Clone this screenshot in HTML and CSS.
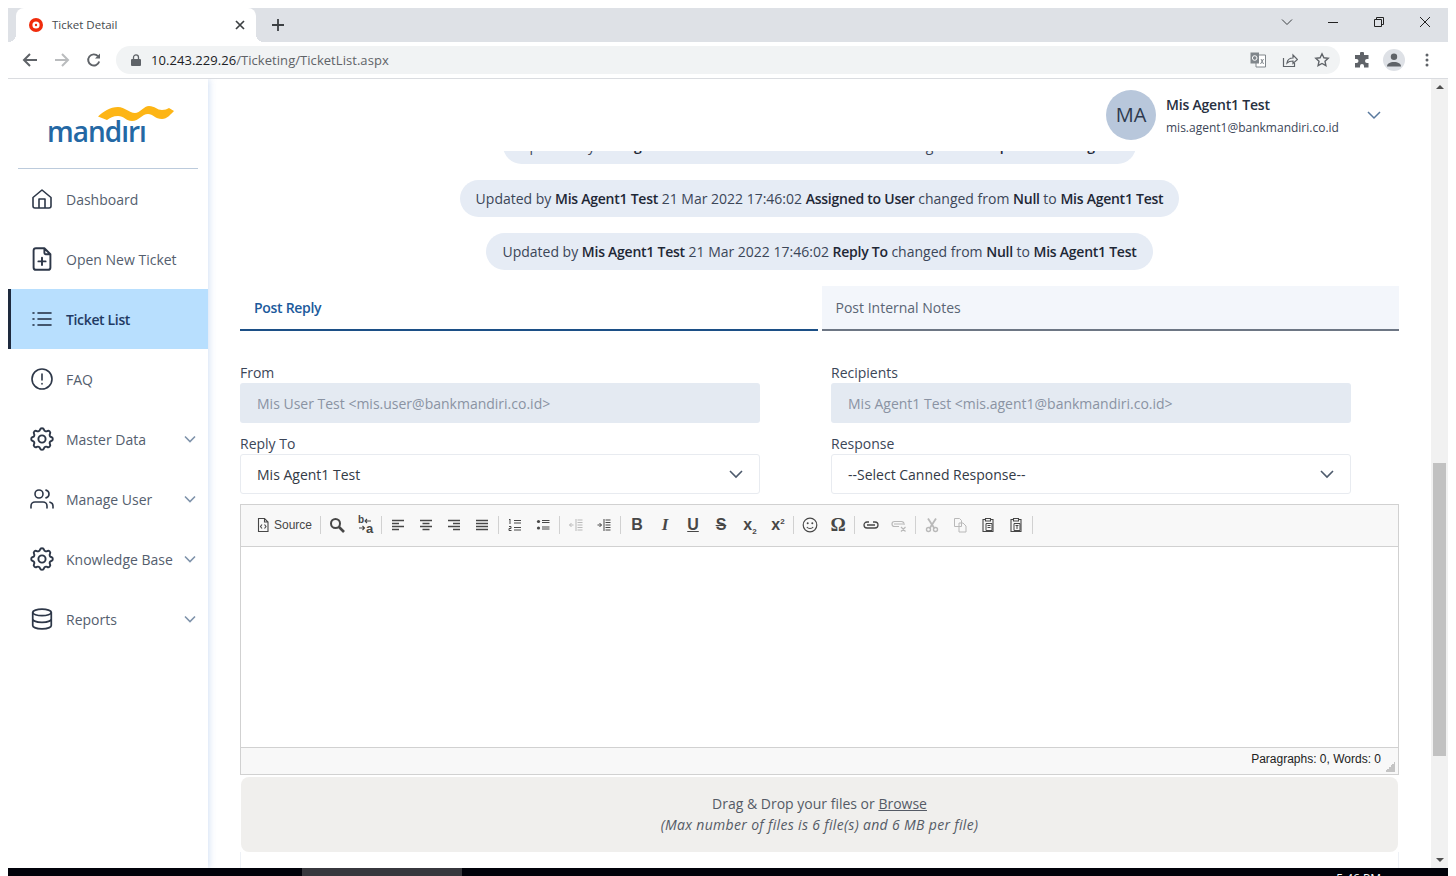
FILE: index.html
```html
<!DOCTYPE html>
<html lang="en">
<head>
<meta charset="UTF-8">
<meta name="viewport" content="width=device-width, initial-scale=1.0">
<title>Ticket Detail</title>
<link rel="stylesheet" href="styles.css">
</head>
<body>
<div class="screen">

    <!-- browser tabs -->
    <div class="tabstrip">
        <div class="browser-tab">
            <svg class="favicon" width="14" height="14" viewBox="0 0 14 14"><circle cx="7" cy="7" r="7" fill="#f02c0c"/><circle cx="7" cy="7" r="3.6" fill="#fff"/><circle cx="7" cy="7" r="1.2" fill="#f02c0c"/></svg>
            <span class="browser-tab-title">Ticket Detail</span>
            <svg width="10" height="10" viewBox="0 0 10 10" stroke="#3c4043" stroke-width="1.7" fill="none"><path d="M1 1l8 8M9 1l-8 8"/></svg>
        </div>
        <svg class="new-tab" width="14" height="14" viewBox="0 0 14 14" stroke="#3c4043" stroke-width="1.8"><path d="M7 1v12M1 7h12"/></svg>
        <div class="window-buttons">
            <svg width="12" height="12" viewBox="0 0 12 12" fill="none" stroke="#3c4043"><path d="M1 3.5l5 5 5-5"/></svg>
            <svg width="12" height="12" viewBox="0 0 12 12" stroke="#222"><path d="M1 6.5h10"/></svg>
            <svg width="12" height="12" viewBox="0 0 12 12" fill="none" stroke="#222"><path d="M1.5 3.5h7v7h-7zM3.5 3.5v-2h7v7h-2"/></svg>
            <svg width="12" height="12" viewBox="0 0 12 12" stroke="#222"><path d="M1 1l10 10M11 1L1 11"/></svg>
        </div>
    </div>

    <!-- browser toolbar -->
    <div class="toolbar">
        <svg width="16" height="16" viewBox="0 0 16 16" fill="none" stroke="#5f6368" stroke-width="2"><path d="M15 8H2M8 2L2 8l6 6"/></svg>
        <svg width="16" height="16" viewBox="0 0 16 16" fill="none" stroke="#babcbe" stroke-width="2"><path d="M1 8h13M8 2l6 6-6 6"/></svg>
        <svg width="16" height="16" viewBox="0 0 16 16" fill="none" stroke="#5f6368" stroke-width="1.9"><path d="M13.2 9.5A5.6 5.6 0 1 1 12 4.2"/><path d="M14 1.5v5H9" fill="#5f6368" stroke="none"/></svg>
        <div class="omnibox">
            <svg width="10" height="12" viewBox="0 0 10 12"><path d="M1 5h8a1 1 0 0 1 1 1v5a1 1 0 0 1-1 1H1a1 1 0 0 1-1-1V6a1 1 0 0 1 1-1z" fill="#5f6368"/><path d="M2.5 5V3.4a2.5 2.5 0 0 1 5 0V5" fill="none" stroke="#5f6368" stroke-width="1.3"/></svg>
            <span class="url"><span class="url-host">10.243.229.26</span>/Ticketing/TicketList.aspx</span>
            <div class="omnibox-icons">
                <svg width="16" height="16" viewBox="0 0 16 16"><path d="M6 3h9.500v12H6z" fill="#fff" stroke="#80868b"/><path d="M.5.500h8.500v11H.5z" fill="#80868b"/><circle cx="4.700" cy="6" r="2.300" fill="none" stroke="#fff"/><path d="M11 7l2.500 5M13.500 7l-3 5" stroke="#80868b" fill="none"/></svg>
                <svg width="16" height="16" viewBox="0 0 16 16" fill="none" stroke="#5f6368" stroke-width="1.200"><path d="M1.500 6v8.500h11V11"/><path d="M5 11c.5-3.500 3-5 6-5V3l4.500 4.500L11 11.500V9c-2.500 0-4.500.5-6 2z"/></svg>
                <svg width="16" height="16" viewBox="0 0 16 16" fill="none" stroke="#5f6368" stroke-width="1.400"><path d="M8 1.800l1.900 4 4.300.5-3.200 3 .9 4.300L8 11.500l-3.900 2.100.9-4.300-3.200-3 4.300-.5z"/></svg>
            </div>
        </div>
        <svg width="16" height="16" viewBox="0 0 16 16" fill="#5f6368"><path d="M6 1.500a2 2 0 0 1 4 0V3h4.500v4H13a2 2 0 0 0 0 4h1.500v4.500H10V14a2 2 0 0 0-4 0v1.500H1V11h1.500a2 2 0 0 0 0-4H1V3h5z"/></svg>
        <div class="profile"><svg width="14" height="14" viewBox="0 0 14 14" fill="#5f6368"><circle cx="7" cy="3.800" r="3.200"/><path d="M0 13.500c0-3 3-4.500 7-4.500s7 1.500 7 4.500z"/></svg></div>
        <svg width="4" height="14" viewBox="0 0 4 14" fill="#5f6368"><circle cx="2" cy="2" r="1.500"/><circle cx="2" cy="7" r="1.500"/><circle cx="2" cy="12" r="1.500"/></svg>
    </div>

    <div class="page">

        <div class="sidebar">
            <div class="logo">
                <span class="logo-text">mandiri</span>
                <!-- the logo has no dots on the i's, the two white bars cover them -->
                <svg class="logo-wave" width="78" height="21" viewBox="0 0 78 21"><path d="M24 13h7v7h-7zM41 13h7v7h-7z" fill="#fff"/><path d="M0 10.500C5 6 12 1 20 1c7 0 11 6 17 6 5 0 9-7 14-7 6 0 8 4 13 4 3 0 5-1 7-2l5 3c-3 3-7 8-12 8-7 0-9-5-14-5-6 0-9 7-16 7-6 0-8-5-14-5-5 0-8 2-11 4z" fill="#fdb515"/></svg>
            </div>
            <nav class="nav">
                <a class="nav-item">
                    <svg class="nav-icon" viewBox="0 0 24 24"><path d="M3 10.500L12 3l9 7.500V19a2 2 0 0 1-2 2H5a2 2 0 0 1-2-2zM9 21v-9h6v9"/></svg>
                    <span>Dashboard</span>
                </a>
                <a class="nav-item">
                    <svg class="nav-icon" viewBox="2 2 20 20"><path d="M14 3v4a1 1 0 0 0 1 1h4M17 21H7a2 2 0 0 1-2-2V5a2 2 0 0 1 2-2h7l5 5v11a2 2 0 0 1-2 2zM12 11v6M9 14h6"/></svg>
                    <span>Open New Ticket</span>
                </a>
                <a class="nav-item active">
                    <svg class="nav-icon" viewBox="0 0 24 24"><path d="M8 6h13M8 12h13M8 18h13M3 6h1M3 12h1M3 18h1"/></svg>
                    <span>Ticket List</span>
                </a>
                <a class="nav-item">
                    <svg class="nav-icon" viewBox="0 0 24 24"><circle cx="12" cy="12" r="10"/><path d="M12 7v6M12 16.500v.5"/></svg>
                    <span>FAQ</span>
                </a>
                <a class="nav-item">
                    <svg class="nav-icon" viewBox="2 2 20 20"><path d="M10.325 4.317c.426-1.756 2.924-1.756 3.350 0a1.724 1.724 0 0 0 2.573 1.066c1.543-.94 3.310.826 2.370 2.370a1.724 1.724 0 0 0 1.065 2.572c1.756.426 1.756 2.924 0 3.350a1.724 1.724 0 0 0-1.066 2.573c.94 1.543-.826 3.310-2.370 2.370a1.724 1.724 0 0 0-2.572 1.065c-.426 1.756-2.924 1.756-3.350 0a1.724 1.724 0 0 0-2.573-1.066c-1.543.94-3.310-.826-2.370-2.370a1.724 1.724 0 0 0-1.065-2.572c-1.756-.426-1.756-2.924 0-3.350a1.724 1.724 0 0 0 1.066-2.573c-.94-1.543.826-3.310 2.370-2.370 1 .608 2.296.07 2.572-1.065z"/><circle cx="12" cy="12" r="3"/></svg>
                    <span>Master Data</span>
                    <svg class="nav-arrow" viewBox="0 0 12 12"><path d="M1 3.500l5 5 5-5"/></svg>
                </a>
                <a class="nav-item">
                    <svg class="nav-icon" viewBox="0 0 24 24"><circle cx="9" cy="7" r="4"/><path d="M1 21v-2a4 4 0 0 1 4-4h8a4 4 0 0 1 4 4v2M16 3.130a4 4 0 0 1 0 7.750M23 21v-2a4 4 0 0 0-3-3.850"/></svg>
                    <span>Manage User</span>
                    <svg class="nav-arrow" viewBox="0 0 12 12"><path d="M1 3.500l5 5 5-5"/></svg>
                </a>
                <a class="nav-item">
                    <svg class="nav-icon" viewBox="2 2 20 20"><path d="M10.325 4.317c.426-1.756 2.924-1.756 3.350 0a1.724 1.724 0 0 0 2.573 1.066c1.543-.94 3.310.826 2.370 2.370a1.724 1.724 0 0 0 1.065 2.572c1.756.426 1.756 2.924 0 3.350a1.724 1.724 0 0 0-1.066 2.573c.94 1.543-.826 3.310-2.370 2.370a1.724 1.724 0 0 0-2.572 1.065c-.426 1.756-2.924 1.756-3.350 0a1.724 1.724 0 0 0-2.573-1.066c-1.543.94-3.310-.826-2.370-2.370a1.724 1.724 0 0 0-1.065-2.572c-1.756-.426-1.756-2.924 0-3.350a1.724 1.724 0 0 0 1.066-2.573c-.94-1.543.826-3.310 2.370-2.370 1 .608 2.296.07 2.572-1.065z"/><circle cx="12" cy="12" r="3"/></svg>
                    <span>Knowledge Base</span>
                    <svg class="nav-arrow" viewBox="0 0 12 12"><path d="M1 3.500l5 5 5-5"/></svg>
                </a>
                <a class="nav-item">
                    <svg class="nav-icon" viewBox="1 1 22 22"><ellipse cx="12" cy="6" rx="8.500" ry="3"/><path d="M3.500 6v6c0 1.700 3.800 3 8.500 3s8.500-1.300 8.500-3V6M3.500 12v6c0 1.700 3.800 3 8.500 3s8.500-1.300 8.500-3v-6"/></svg>
                    <span>Reports</span>
                    <svg class="nav-arrow" viewBox="0 0 12 12"><path d="M1 3.500l5 5 5-5"/></svg>
                </a>
            </nav>
        </div>

        <div class="main">
            <div class="user-bar">
                <div class="avatar">MA</div>
                <div class="user-info">
                    <div class="user-name">Mis Agent1 Test</div>
                    <div class="user-mail">mis.agent1@bankmandiri.co.id</div>
                </div>
                <svg class="user-arrow" width="16" height="16" viewBox="0 0 16 16"><path d="M2 5l6 6 6-6"/></svg>
            </div>

            <div class="content">
                <div class="history">
                    <div class="pill">Updated by <b>Mis Agent1 Test</b> 21 Mar 2022 17:46:02 <b>Status</b> changed from <b>Opened</b> to <b>Assigned</b></div>
                    <div class="pill">Updated by <b>Mis Agent1 Test</b> 21 Mar 2022 17:46:02 <b>Assigned to User</b> changed from <b>Null</b> to <b>Mis Agent1 Test</b></div>
                    <div class="pill">Updated by <b>Mis Agent1 Test</b> 21 Mar 2022 17:46:02 <b>Reply To</b> changed from <b>Null</b> to <b>Mis Agent1 Test</b></div>
                </div>

                <div class="tabs">
                    <div class="tab tab-on">Post Reply</div>
                    <div class="tab">Post Internal Notes</div>
                </div>

                <div class="form-grid">
                    <div class="field">
                        <label>From</label>
                        <div class="input-off">Mis User Test &lt;mis.user@bankmandiri.co.id&gt;</div>
                    </div>
                    <div class="field">
                        <label>Recipients</label>
                        <div class="input-off">Mis Agent1 Test &lt;mis.agent1@bankmandiri.co.id&gt;</div>
                    </div>
                    <div class="field">
                        <label>Reply To</label>
                        <div class="select">Mis Agent1 Test
                            <svg width="16" height="16" viewBox="0 0 16 16"><path d="M2 5l6 6 6-6"/></svg>
                        </div>
                    </div>
                    <div class="field">
                        <label>Response</label>
                        <div class="select">--Select Canned Response--
                            <svg width="16" height="16" viewBox="0 0 16 16"><path d="M2 5l6 6 6-6"/></svg>
                        </div>
                    </div>
                </div>

                <div class="editor">
                    <div class="editor-bar">
                        <div class="btn-source">
                            <svg class="ico" viewBox="0 0 16 16"><path d="M3.500 1.500h6l3.500 3.500v9.500H3.500zM9.500 1.500V5H13M7 7.500L5.500 9.500 7 11.500M9.500 7.500L11 9.500 9.500 11.500" stroke-width="1.100"/></svg>
                            <span>Source</span>
                        </div>
                        <i class="sep"></i>
                        <div class="btn"><svg class="ico" viewBox="0 0 16 16"><circle cx="6.500" cy="6.500" r="4.500" stroke-width="2"/><path d="M10 10l5 5" stroke-width="2.600"/></svg></div>
                        <div class="btn replace"><span class="rep-b">b</span><span class="rep-a">a</span><svg class="ico" viewBox="0 0 16 16"><path d="M8 4h6M10 2L8 4l2 2M2 11h5M5.500 9L7.500 11l-2 2" stroke-width="1.100"/></svg></div>
                        <i class="sep"></i>
                        <div class="btn"><svg class="ico" viewBox="0 0 16 16"><path d="M2 3.500h12M2 6.500h7M2 9.500h12M2 12.500h7" stroke-width="1.500"/></svg></div>
                        <div class="btn"><svg class="ico" viewBox="0 0 16 16"><path d="M2 3.500h12M4.500 6.500h7M2 9.500h12M4.500 12.500h7" stroke-width="1.500"/></svg></div>
                        <div class="btn"><svg class="ico" viewBox="0 0 16 16"><path d="M2 3.500h12M7 6.500h7M2 9.500h12M7 12.500h7" stroke-width="1.500"/></svg></div>
                        <div class="btn"><svg class="ico" viewBox="0 0 16 16"><path d="M2 3.500h12M2 6.500h12M2 9.500h12M2 12.500h12" stroke-width="1.500"/></svg></div>
                        <i class="sep"></i>
                        <div class="btn"><svg class="ico" viewBox="0 0 16 16"><path d="M7 3.500h7M7 6h7M7 10.500h7M7 13h7M3 2v5M2 2.500h1M2 9.500h2v2H2v2h2.500" stroke-width="1"/></svg></div>
                        <div class="btn"><svg class="ico" viewBox="0 0 16 16"><circle cx="3.500" cy="4.500" r="1.600" class="dot"/><circle cx="3.500" cy="11" r="1.600" class="dot"/><path d="M7 3.500h7.500M7 5.500h7.500M7 10h7.500M7 12h7.500" stroke-width="1"/></svg></div>
                        <i class="sep"></i>
                        <div class="btn off"><svg class="ico" viewBox="0 0 16 16"><path d="M8 2v12M9.500 3h5M9.500 5.500h5M9.500 8h5M9.500 10.500h5M9.500 13h5M1.500 8h4M3.500 6L1.500 8l2 2" stroke-width="1"/></svg></div>
                        <div class="btn"><svg class="ico" viewBox="0 0 16 16"><path d="M8 2v12M9.500 3h5M9.500 5.500h5M9.500 8h5M9.500 10.500h5M9.500 13h5M1.500 8h4M3.500 6l2 2-2 2" stroke-width="1"/></svg></div>
                        <i class="sep"></i>
                        <div class="btn txt txt-b"><b>B</b></div>
                        <div class="btn txt txt-i"><b>I</b></div>
                        <div class="btn txt txt-u"><b>U</b></div>
                        <div class="btn txt txt-s"><b>S</b></div>
                        <div class="btn txt"><span class="txt-x"><b>x</b><sub>2</sub></span></div>
                        <div class="btn txt"><span class="txt-x"><b>x</b><sup>2</sup></span></div>
                        <i class="sep"></i>
                        <div class="btn"><svg class="ico" viewBox="0 0 16 16"><circle cx="8" cy="8" r="6.800" stroke-width="1.200"/><circle cx="5.700" cy="6.300" r="1" class="dot"/><circle cx="10.300" cy="6.300" r="1" class="dot"/><path d="M4.800 10c1.500 1.900 4.900 1.900 6.400 0" stroke-width="1.100"/></svg></div>
                        <div class="btn txt omega">Ω</div>
                        <i class="sep"></i>
                        <div class="btn"><svg class="ico" viewBox="0 0 16 16"><path d="M6 5H4a3 3 0 0 0 0 6h8a3 3 0 0 0 0-6h-2M4 8h8" stroke-width="1.300"/></svg></div>
                        <div class="btn off"><svg class="ico" viewBox="0 0 16 16"><path d="M13 8V7a2.500 2.500 0 0 0-2.500-2.500h-7a2.500 2.500 0 0 0 0 5H8M3 7h9M10 10l4.500 4.500M14.500 10L10 14.500" stroke-width="1.200"/></svg></div>
                        <i class="sep"></i>
                        <div class="btn off"><svg class="ico" viewBox="0 0 16 16"><circle cx="4.500" cy="12.500" r="2" stroke-width="1.400"/><circle cx="11.500" cy="12.500" r="2" stroke-width="1.400"/><path d="M4 1.500l6.500 10M12 1.500L5.500 11.500" stroke-width="1.800"/></svg></div>
                        <div class="btn off"><svg class="ico" viewBox="0 0 16 16"><path d="M2.500 1.500h5l2 2v6h-7zM7 6h4l3 3v6H7z" stroke-width="1"/></svg></div>
                        <div class="btn"><svg class="ico" viewBox="0 0 16 16"><path d="M5 2.500H3v12h10v-12h-2M5.500 1.500h5v2.500h-5z" stroke-width="1.100"/><path d="M6 6.500h6v7H6zM7.500 8.500h3M7.500 10.500h3" stroke-width="1"/></svg></div>
                        <div class="btn"><svg class="ico" viewBox="0 0 16 16"><path d="M5 2.500H3v12h10v-12h-2M5.500 1.500h5v2.500h-5z" stroke-width="1.100"/><path d="M6 6.500h6v7H6zM7.500 8.500h3M9 8.500v3.500" stroke-width="1"/></svg></div>
                        <i class="sep"></i>
                    </div>
                    <div class="editor-body"></div>
                    <div class="editor-status">
                        <span>Paragraphs: 0, Words: 0</span>
                        <i class="grip"></i>
                    </div>
                </div>

                <div class="dropzone">
                    <div>Drag &amp; Drop your files or <u>Browse</u></div>
                    <div class="drop-note">(Max number of files is 6 file(s) and 6 MB per file)</div>
                </div>
                <div class="content-end"></div>
            </div>
        </div>

        <div class="scrollbar">
            <i class="arrow-up"></i>
            <div class="scroll-track"><div class="scroll-thumb"></div></div>
            <i class="arrow-down"></i>
        </div>
    </div>

    <!-- windows taskbar, mostly cut off -->
    <div class="taskbar">
        <div class="task-app"></div>
        <div class="task-clock">5:46 PM</div>
    </div>
</div>
</body>
</html>
```

FILE: styles.css
```css
html, body {
    margin: 0;
    height: 100%;
    background: #fff;
}
body {
    font-family: "Open Sans", sans-serif;
    font-size: 14px;
    color: #3b4658;
    overflow: hidden;
}
.screen {
    height: 876px;
    padding: 8px 8px 0;
    box-sizing: border-box;
    display: flex;
    flex-direction: column;
}

/* browser */
.tabstrip {
    height: 34px;
    flex: none;
    background: #dee1e6;
    display: flex;
    align-items: center;
    padding-left: 8px;
}
.browser-tab {
    width: 240px;
    height: 34px;
    box-sizing: border-box;
    background: #fff;
    border-radius: 8px 8px 0 0;
    display: flex;
    align-items: center;
    padding: 0 11px 0 13px;
    position: relative;
}
.browser-tab::before,
.browser-tab::after {
    content: "";
    position: absolute;
    bottom: 0;
    width: 8px;
    height: 8px;
}
.browser-tab::before {
    left: -8px;
    background: radial-gradient(circle at 0 0, #dee1e6 8px, #fff 8px);
}
.browser-tab::after {
    right: -8px;
    background: radial-gradient(circle at 100% 0, #dee1e6 8px, #fff 8px);
}
.favicon {
    margin-right: 9px;
}
.browser-tab-title {
    flex: 1;
    font-size: 11.5px;
    padding-bottom: 2px;
    color: #45494e;
}
.new-tab {
    margin-left: 15px;
}
.window-buttons {
    margin-left: auto;
    display: flex;
    gap: 34px;
    padding-right: 17px;
    margin-top: -6px;
}
.toolbar {
    height: 37px;
    flex: none;
    box-sizing: border-box;
    border-bottom: 1px solid #dadce0;
    display: flex;
    align-items: center;
    padding-left: 14px;
    gap: 16px;
}
.omnibox {
    width: 1224px;
    height: 28px;
    margin-left: -2px;
    margin-right: -2px;
    background: #f1f3f4;
    border-radius: 14px;
    display: flex;
    align-items: center;
    padding-left: 15px;
    box-sizing: border-box;
}
.url {
    margin-left: 10px;
    font-size: 13px;
    letter-spacing: 0.05px;
    color: #5f6368;
}
.url-host {
    color: #202124;
}
.omnibox-icons {
    margin-left: auto;
    display: flex;
    gap: 16px;
    padding-right: 10px;
}
.profile {
    width: 22px;
    height: 22px;
    margin: 0 4px 0 -3px;
    border-radius: 50%;
    background: #dee1e6;
    display: flex;
    align-items: center;
    justify-content: center;
}

/* page */
.page {
    flex: 1;
    min-height: 0;
    display: flex;
}
.sidebar {
    width: 200px;
    flex: none;
    background: #fff;
    box-shadow: 1px 0 7px rgba(120, 160, 220, 0.35);
    clip-path: inset(0 -12px 0 0);
    position: relative;
}
.logo {
    height: 89px;
    margin: 0 10px;
    border-bottom: 1px solid #bccbdc;
    position: relative;
}
.logo-text {
    position: absolute;
    left: 29px;
    top: 32px;
    font-size: 28px;
    font-weight: 600;
    letter-spacing: -1px;
    line-height: 40px;
    color: #2468a4;
}
.logo-wave {
    position: absolute;
    left: 80px;
    top: 27px;
}
.nav-item {
    height: 60px;
    box-sizing: border-box;
    display: flex;
    align-items: center;
    gap: 12px;
    padding: 0 12px 0 22px;
    color: #545e6e;
}
.nav-item span {
    flex: 1;
    white-space: nowrap;
}
.nav-icon {
    width: 24px;
    height: 24px;
    flex: none;
    fill: none;
    stroke: #2d3748;
    stroke-width: 1.6;
    stroke-linecap: round;
    stroke-linejoin: round;
}
.nav-arrow {
    width: 12px;
    height: 12px;
    flex: none;
    margin-left: -8px;
    fill: none;
    stroke: #7f93ab;
    stroke-width: 1.6;
}
.nav-item.active {
    background: #b8dffe;
    border-left: 3px solid #1e2a3e;
    padding-left: 19px;
    color: #1f3a63;
    font-weight: 600;
    letter-spacing: -0.35px;
}
.nav-item.active .nav-icon {
    stroke: #1e2a3e;
}

.main {
    flex: 1;
    min-width: 0;
    display: flex;
    flex-direction: column;
}
.user-bar {
    height: 72px;
    flex: none;
    display: flex;
    align-items: center;
    padding-right: 49px;
    justify-content: flex-end;
}
.avatar {
    width: 50px;
    height: 50px;
    box-sizing: border-box;
    padding-bottom: 1px;
    border-radius: 50%;
    background: #b8c7db;
    color: #2e3a4e;
    font-size: 20px;
    display: flex;
    align-items: center;
    justify-content: center;
}
.user-info {
    margin-left: 10px;
    width: 200px;
    padding-top: 2px;
}
.user-name {
    font-weight: 600;
    letter-spacing: -0.2px;
    color: #27303f;
    line-height: 20px;
    margin-bottom: 3px;
}
.user-mail {
    font-size: 12px;
    line-height: 20px;
    color: #3b4658;
}
.user-arrow {
    fill: none;
    stroke: #59799e;
    stroke-width: 1.5;
}
.content {
    flex: 1;
    min-height: 0;
    overflow: hidden;
    padding: 0 32px;
    display: flex;
    flex-direction: column;
}
.history {
    flex: none;
    margin-top: -24px;
    display: flex;
    flex-direction: column;
    align-items: center;
    gap: 16px;
}
.pill {
    height: 37px;
    line-height: 37px;
    padding: 0 16px;
    border-radius: 19px;
    background: #e6ecf5;
    white-space: nowrap;
}
.pill b {
    font-weight: 600;
    letter-spacing: -0.25px;
    color: #1e2735;
}
.tabs {
    flex: none;
    margin-top: 16px;
    display: flex;
    gap: 4px;
}
.tab {
    flex: 1;
    height: 45px;
    line-height: 43px;
    box-sizing: border-box;
    padding-left: 14px;
    background: #f3f6fb;
    border-bottom: 2px solid #6d7684;
    color: #5a6575;
}
.tab-on {
    background: #fff;
    border-bottom-color: #1c4f86;
    color: #1c5a9c;
    font-weight: 600;
    letter-spacing: -0.3px;
}
.form-grid {
    flex: none;
    margin-top: 32px;
    display: grid;
    grid-template-columns: 520px 520px;
    column-gap: 71px;
    row-gap: 11px;
}
.field label {
    display: block;
    height: 20px;
    line-height: 20px;
    color: #3b4658;
}
.input-off {
    height: 40px;
    line-height: 42px;
    padding-left: 17px;
    background: #e4eaf2;
    border-radius: 3px;
    color: #8a93a3;
}
.select {
    height: 40px;
    box-sizing: border-box;
    padding: 0 15px 0 16px;
    border: 1px solid #e8ebf0;
    border-radius: 3px;
    color: #333a46;
    display: flex;
    align-items: center;
    justify-content: space-between;
}
.select svg {
    fill: none;
    stroke: #4d5a6c;
    stroke-width: 1.6;
}

/* editor */
.editor {
    flex: none;
    margin-top: 10px;
    border: 1px solid #d1d1d1;
    font-family: "Liberation Sans", Arial, sans-serif;
    color: #474747;
}
.editor-bar {
    height: 42px;
    box-sizing: border-box;
    background: #f8f8f8;
    border-bottom: 1px solid #d1d1d1;
    padding: 0 0 1px 9px;
    display: flex;
    align-items: center;
}
.btn-source {
    width: 68px;
    box-sizing: border-box;
    padding-left: 5px;
    display: flex;
    align-items: center;
    gap: 3px;
    font-size: 12px;
}
.btn {
    width: 28px;
    height: 28px;
    display: flex;
    align-items: center;
    justify-content: center;
    position: relative;
}
.ico {
    width: 16px;
    height: 16px;
    flex: none;
    fill: none;
    stroke: #474747;
}
.ico .dot {
    fill: #474747;
    stroke: none;
}
.off {
    opacity: 0.35;
}
.sep {
    width: 5px;
    height: 18px;
    background: linear-gradient(#d1d1d1, #d1d1d1) no-repeat 2px 0 / 1px 100%;
}
.txt {
    font-size: 16px;
    color: #474747;
}
.txt-i b {
    font-family: "Liberation Serif", serif;
    font-style: italic;
    font-size: 17px;
}
.txt-u b {
    text-decoration: underline;
}
.txt-s b {
    text-decoration: line-through;
}
.txt-x {
    padding-left: 2px;
}
.txt-x sub,
.txt-x sup {
    font-size: 8px;
    font-weight: 700;
    line-height: 0;
}
.omega {
    font-size: 19px;
    font-weight: 700;
    font-family: "Liberation Serif", serif;
}
.replace .ico {
    position: absolute;
    left: 6px;
    top: 6px;
}
.rep-b,
.rep-a {
    position: absolute;
    font-weight: 700;
    line-height: 1;
}
.rep-b {
    font-size: 10px;
    left: 7px;
    top: 4px;
}
.rep-a {
    font-size: 13px;
    left: 15px;
    top: 11px;
}
.editor-body {
    height: 200px;
    background: #fff;
}
.editor-status {
    height: 27px;
    box-sizing: border-box;
    background: #f8f8f8;
    border-top: 1px solid #d1d1d1;
    padding: 4px 17px 0 0;
    font-size: 12px;
    line-height: 14px;
    color: #222;
    text-align: right;
    position: relative;
}
.grip {
    position: absolute;
    right: 3px;
    bottom: 2px;
    width: 10px;
    height: 10px;
    background: linear-gradient(to top left, #c4c4c4 50%, transparent 50%);
}
.dropzone {
    flex: none;
    height: 75px;
    margin: 2px 1px 0;
    background: #f0efed;
    border-radius: 8px;
    text-align: center;
    line-height: 21px;
    padding-top: 16px;
    box-sizing: border-box;
    color: #555b66;
}
.drop-note {
    font-style: italic;
    letter-spacing: 0.33px;
}
.content-end {
    flex: 1;
    border-left: 1px solid #eef1f6;
    border-right: 1px solid #eef1f6;
}

/* page scrollbar */
.scrollbar {
    width: 17px;
    flex: none;
    background: #f1f1f1;
    display: flex;
    flex-direction: column;
    align-items: center;
}
.arrow-up,
.arrow-down {
    flex: none;
    width: 0;
    height: 0;
    border-left: 4px solid transparent;
    border-right: 4px solid transparent;
}
.arrow-up {
    margin: 6px 0;
    border-bottom: 4px solid #505050;
}
.arrow-down {
    margin: 6px 0;
    border-top: 4px solid #505050;
}
.scroll-track {
    flex: 1;
    width: 100%;
    padding-top: 368px;
    box-sizing: border-box;
}
.scroll-thumb {
    height: 293px;
    margin: 0 2px;
    background: #c1c1c1;
}

.taskbar {
    height: 8px;
    flex: none;
    background: #01020a;
    position: relative;
    overflow: hidden;
}
.task-app {
    width: 160px;
    height: 8px;
    margin-left: 294px;
    background: #37373d;
}
.task-clock {
    position: absolute;
    top: 3px;
    right: 67px;
    font-size: 12px;
    line-height: 16px;
    color: #fff;
}
```
